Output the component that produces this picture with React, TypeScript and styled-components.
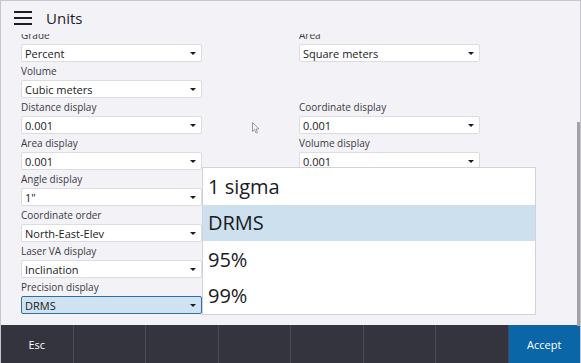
import React from "react";
import styled, { createGlobalStyle } from "styled-components";

const GlobalStyle = createGlobalStyle`
    body {
        margin: 0;
        font-family: "Open Sans", "Noto Sans", sans-serif;
    }
`;

const Frame = styled.div`
    position: relative;
    width: 581px;
    height: 363px;
    box-sizing: border-box;
    border: 1px solid #c6c6cc;
    border-bottom: 0;
    background: #f3f2f7;
    display: flex;
    flex-direction: column;
    overflow: hidden;
`;

const Header = styled.div`
    height: 33px;
    display: flex;
    align-items: center;
    padding-left: 13px;
    gap: 14px;
    flex-shrink: 0;
`;

const Burger = styled.div`
    display: flex;
    flex-direction: column;
    gap: 4px;
    width: 18px;
    span {
        display: block;
        height: 2px;
        background: #1d1d27;
    }
`;

const Title = styled.h1`
    margin: 0;
    font-size: 15px;
    font-weight: 400;
    color: #1d1d27;
`;

const Body = styled.div`
    flex: 1;
    overflow: hidden;
`;

const Columns = styled.div`
    display: flex;
    gap: 97px;
    padding-left: 20px;
    margin-top: -8px;
`;

const Column = styled.div`
    display: flex;
    flex-direction: column;
    width: 181px;
`;

const Field = styled.div`
    height: 36px;
`;

const Label = styled.div`
    height: 18px;
    line-height: 18px;
    font-size: 10px;
    color: #3a3a44;
`;

const Select = styled.div<{ $focused?: boolean }>`
    height: 18px;
    box-sizing: border-box;
    display: flex;
    align-items: center;
    justify-content: space-between;
    padding: 0 5px 0 3px;
    border: 1px solid ${p => (p.$focused ? "#2f6fa6" : "#dcdce2")};
    border-radius: 2px;
    background: ${p => (p.$focused ? "#cfe2f0" : "#ffffff")};
    font-size: 11px;
    color: #1a1a24;
`;

const Caret = styled.span`
    width: 0;
    height: 0;
    border-left: 3px solid transparent;
    border-right: 3px solid transparent;
    border-top: 3px solid #1a1a24;
`;

const Popup = styled.div`
    position: absolute;
    left: 201px;
    top: 166px;
    width: 334px;
    box-sizing: border-box;
    border: 1px solid #d2d2d8;
    background: #ffffff;
`;

const Option = styled.div<{ $selected?: boolean }>`
    height: 36.5px;
    display: flex;
    align-items: center;
    padding-left: 5px;
    font-size: 20px;
    color: #1a1a24;
    background: ${p => (p.$selected ? "#cde0ee" : "transparent")};
`;

const ScrollThumb = styled.div`
    position: absolute;
    right: 0;
    top: 121px;
    width: 3px;
    height: 204px;
    background: #a2a2aa;
`;

const Pointer = styled.svg`
    position: absolute;
    left: 251px;
    top: 121px;
`;

const Footer = styled.div`
    height: 38px;
    display: flex;
    background: #34343f;
    flex-shrink: 0;
`;

const Key = styled.div<{ $primary?: boolean }>`
    flex: 1;
    display: flex;
    align-items: center;
    justify-content: center;
    font-size: 11px;
    color: #ffffff;
    background: ${p => (p.$primary ? "#0b66a7" : "transparent")};
    border-left: 1px solid #4b4b57;
    &:first-child {
        border-left: 0;
    }
`;

type FieldData = { label: string; value: string; focused?: boolean } | null;

const leftFields: FieldData[] = [
    { label: "Grade", value: "Percent" },
    { label: "Volume", value: "Cubic meters" },
    { label: "Distance display", value: "0.001" },
    { label: "Area display", value: "0.001" },
    { label: "Angle display", value: "1\"" },
    { label: "Coordinate order", value: "North-East-Elev" },
    { label: "Laser VA display", value: "Inclination" },
    { label: "Precision display", value: "DRMS", focused: true },
];

const rightFields: FieldData[] = [
    { label: "Area", value: "Square meters" },
    null,
    { label: "Coordinate display", value: "0.001" },
    { label: "Volume display", value: "0.001" },
];

const options = ["1 sigma", "DRMS", "95%", "99%"];
const keys = ["Esc", "", "", "", "", "", "", "Accept"];

function renderField(field: FieldData, i: number) {
    if (!field) return <Field key={i} />;
    return (
        <Field key={i}>
            <Label>{field.label}</Label>
            <Select $focused={field.focused}>
                <span>{field.value}</span>
                <Caret />
            </Select>
        </Field>
    );
}

export default function App() {
    return (
        <>
            <GlobalStyle />
            <Frame>
                <Header>
                    <Burger>
                        <span />
                        <span />
                        <span />
                    </Burger>
                    <Title>Units</Title>
                </Header>
                <Body>
                    <Columns>
                        <Column>{leftFields.map(renderField)}</Column>
                        <Column>{rightFields.map(renderField)}</Column>
                    </Columns>
                </Body>
                <Footer>
                    {keys.map((k, i) => (
                        <Key key={i} $primary={k === "Accept"}>
                            {k}
                        </Key>
                    ))}
                </Footer>
                <Popup>
                    {options.map(o => (
                        <Option key={o} $selected={o === "DRMS"}>
                            {o}
                        </Option>
                    ))}
                </Popup>
                <ScrollThumb />
                <Pointer width="8" height="12" viewBox="0 0 8 12">
                    <path d="M0.5 0.5 L0.5 9.5 L2.5 7.5 L4 11 L5.5 10.3 L4 7 L7 7 Z" fill="#f4f4f6" stroke="#9a9aa2" strokeWidth="1" />
                </Pointer>
            </Frame>
        </>
    );
}
